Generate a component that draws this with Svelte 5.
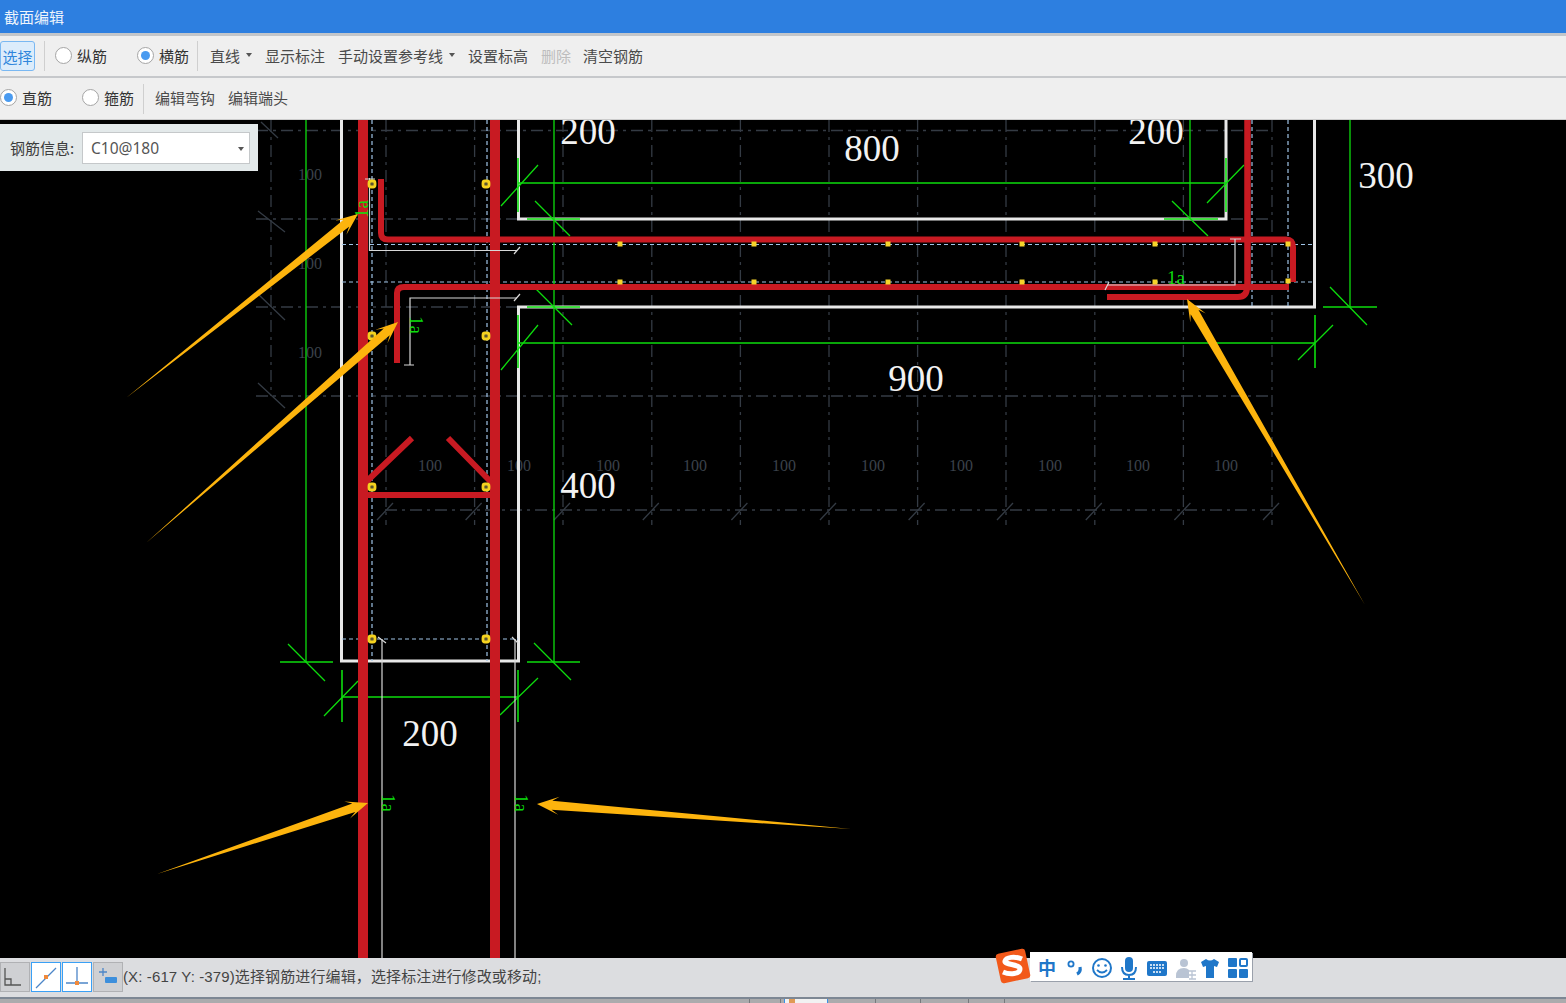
<script>
  const gridX = [386, 474.6, 563, 651.8, 740.4, 829, 917.6, 1006, 1094.8, 1183.4, 1272];
  const gridY = [130.500, 219, 307, 396, 510];
  const hundreds = [430, 519, 608, 695, 784, 873, 961, 1050, 1138, 1226];
  const sideHundreds = [175, 264, 353];
  const smallDots = [[620, 244], [754, 244], [888, 244], [1022, 244], [1155, 244], [620, 282], [754, 282], [888, 282], [1022, 282], [1155, 282], [1288, 244], [1288, 281]];
  const ringDots = [[372, 184], [486, 184], [372, 336], [486, 336], [372, 487], [486, 487], [372, 639], [486, 639]];
  const bigDims = [
    { x: 588, y: 144, t: '200' },
    { x: 872, y: 161, t: '800' },
    { x: 1156, y: 144, t: '200' },
    { x: 1386, y: 188, t: '300' },
    { x: 916, y: 391, t: '900' },
    { x: 588, y: 498, t: '400' },
    { x: 430, y: 746, t: '200' }
  ];
  const taskDividers = [749, 780, 875, 920, 968, 1004];

  // arrow from a thin tail to a swept head
  function arrow(tx, ty, hx, hy) {
    const len = Math.hypot(hx - tx, hy - ty);
    const ux = (hx - tx) / len;
    const uy = (hy - ty) / len;
    const nx = -uy;
    const ny = ux;
    const at = (back, side) => `${(hx - ux * back + nx * side).toFixed(1)},${(hy - uy * back + ny * side).toFixed(1)}`;
    return [`${tx},${ty}`, at(15, 4.5), at(22, 9), `${hx},${hy}`, at(22, -9), at(15, -4.5)].join(' ');
  }

  const arrows = [
    arrow(126, 398, 358, 214),
    arrow(146, 543, 398, 322),
    arrow(157, 874, 368, 803),
    arrow(851, 829, 537, 804),
    arrow(1365, 605, 1187, 299)
  ];
</script>

<div class="window">
  <div class="titlebar">截面编辑</div>

  <div class="toolbar first">
    <button class="select">选择</button>
    <span class="sep"></span>
    <label class="radio r1"><i></i>纵筋</label>
    <label class="radio r2 on"><i></i>横筋</label>
    <span class="sep"></span>
    <span class="tool t1">直线<b></b></span>
    <span class="tool">显示标注</span>
    <span class="tool">手动设置参考线<b></b></span>
    <span class="tool">设置标高</span>
    <span class="tool off">删除</span>
    <span class="tool last">清空钢筋</span>
  </div>

  <div class="toolbar second">
    <label class="radio r3 on"><i></i>直筋</label>
    <label class="radio r4"><i></i>箍筋</label>
    <span class="sep"></span>
    <span class="tool t2">编辑弯钩</span>
    <span class="tool">编辑端头</span>
  </div>

  <div class="canvas">
    <svg viewBox="0 120 1566 838" width="1566" height="838">
      <!-- grid -->
      <g stroke="#343b44" stroke-width="1.3" stroke-dasharray="12 5 3 5" fill="none">
        <path d="M271 120V396" />
        {#each gridX as x}
          <path d="M{x} 120V525" />
        {/each}
        {#each gridY as y}
          <path d="M{y === 510 ? 385 : 256} {y}H1272" />
        {/each}
        {#each gridX as x}
          <path d="M{x - 9} 520L{x + 7} 503" stroke-dasharray="none" />
        {/each}
        <path d="M261 122L278 138M258 211L285 232M258 294L285 320M258 383L285 408" stroke-dasharray="none" />
      </g>
      <g font-family="Liberation Serif, serif" font-size="16" fill="#3b424b" text-anchor="middle">
        {#each hundreds as x}
          <text x={x} y="471">100</text>
        {/each}
        {#each sideHundreds as y}
          <text x="310" y={y + 5}>100</text>
        {/each}
      </g>

      <!-- concrete outline -->
      <path d="M341.500 120V661H518.500V307H1314.500V120M518.500 120V219H1226V120" fill="none" stroke="#e8e8e8" stroke-width="3" />

      <!-- stirrup guide lines -->
      <g stroke="#9fc3e6" stroke-width="1.2" stroke-dasharray="4 3" fill="none">
        <path d="M372 120V661M487 120V661M1252 120V307M1288 120V307" />
        <path d="M342 244.500H1314M342 282H1314M342 639H518" />
      </g>

      <!-- green dimensions -->
      <g stroke="#0ddc0d" stroke-width="1.3" fill="none">
        <path d="M306 120V662M554 120V662M1350 120V307M1190 120V219" />
        <path d="M518 183H1226M518 343H1315M342 697H518" />
        <path d="M280 662H333M527 662H580M1323 307H1377" stroke-width="1.600" />
        <path d="M342 670V722M518 670V722M518 158V212M518 315V368M1226 158V212M1315 315V368" stroke-width="1.600" />
        <path d="M527 219H580M1164 219H1218M527 307H580" stroke-width="1.600" />
        <path d="M288 644L325 681M534 643L571 680M1330 287L1367 325M535 201L570 236M1172 201L1208 236M535 288L572 325" />
        <path d="M324 716L358 681M500 715L538 678M501 206L538 165M1207 203L1244 165M501 370L538 325M1298 360L1333 325" />
      </g>

      <!-- rebar -->
      <g stroke="#c81a22" fill="none">
        <path d="M363 120V958M495 120V958" stroke-width="10" />
        <path d="M1247.500 120V290" stroke-width="6.500" />
        <path d="M381 179V233Q381 239.500 388 239.500H1286Q1293 239.500 1293 247V282" stroke-width="6" />
        <path d="M397 363V293Q397 287 404 287H1289" stroke-width="6" />
        <path d="M1107 297H1238Q1247 297 1247 287" stroke-width="6" />
        <path d="M366 482L412 438M448 438L491 482" stroke-width="6" />
        <path d="M366 495H490" stroke-width="6" />
      </g>

      <!-- rebar annotation lines -->
      <g stroke="#d8d8d8" stroke-width="1.2" fill="none">
        <path d="M369.500 178V250.500H517M410 365V298H517" />
        <path d="M1107 285H1235V239" />
        <path d="M382 639V958M515 639V958" />
        <path d="M365 179H375M404 365H414M514 254L520 247M514 301L520 294M1230 239H1241M1105 290L1109 282M378 637L386 643M512 637L518 643" />
      </g>
      <g font-family="Liberation Serif, serif" font-size="19" fill="#0ddc0d">
        <text x="1167" y="284">1a</text>
        <text transform="translate(410 316) rotate(90)">1a</text>
        <text transform="translate(382 794) rotate(90)">1a</text>
        <text transform="translate(515 794) rotate(90)">1a</text>
        <text transform="translate(368 218) rotate(-90)">1a</text>
      </g>

      <!-- rebar points -->
      {#each smallDots as [x, y]}
        <rect x={x - 2.500} y={y - 2.500} width="5" height="5" fill="#f6d32a" />
      {/each}
      {#each ringDots as [x, y]}
        <rect x={x - 3} y={y - 3} width="6" height="6" rx="2" fill="#5a5530" stroke="#f4d21f" stroke-width="2.800" />
      {/each}

      <!-- dimension values -->
      <g font-family="Liberation Serif, serif" font-size="37" fill="#f2f2f2" text-anchor="middle">
        {#each bigDims as d}
          <text x={d.x} y={d.y}>{d.t}</text>
        {/each}
      </g>

      <!-- arrows -->
      <g fill="#fdb40d">
        {#each arrows as a}
          <polygon points={a} />
        {/each}
      </g>
    </svg>

    <div class="info">
      <span class="info-label">钢筋信息:</span>
      <div class="combo">C10@180<b></b></div>
    </div>
  </div>

  <div class="statusbar">
    <span class="sbtn">
      <svg viewBox="0 0 28 30" width="28" height="30"><path d="M4 6V23H20M4 17H10V23" fill="none" stroke="#555" stroke-width="1.300" /></svg>
    </span>
    <span class="sbtn active">
      <svg viewBox="0 0 28 30" width="28" height="30"><path d="M4 26L24 6" stroke="#4d86c8" stroke-width="1.300" /><rect x="12" y="13" width="4" height="4" fill="#f08a3c" /></svg>
    </span>
    <span class="sbtn active">
      <svg viewBox="0 0 28 30" width="28" height="30"><path d="M14 5V20M3 21H25" stroke="#4d86c8" stroke-width="1.300" /><rect x="12" y="19" width="4" height="4" fill="#f08a3c" /></svg>
    </span>
    <span class="sbtn">
      <svg viewBox="0 0 28 30" width="28" height="30"><path d="M9 6V14M5 10H13" stroke="#4d86c8" stroke-width="1.300" /><rect x="11" y="15" width="12" height="6" rx="1" fill="#3d8fdc" /></svg>
    </span>
    <span class="status-text">(X: -617 Y: -379)选择钢筋进行编辑，选择标注进行修改或移动;</span>

    <div class="ime">
      <svg class="ime-logo" viewBox="0 0 36 36" width="36" height="36">
        <rect x="3" y="3" width="30" height="30" rx="3" fill="#f2591a" transform="rotate(-12 18 18)" />
        <path d="M27 11C20 8 11 9 10 13C9 17 25 16 25 21C25 26 15 27 8 24" fill="none" stroke="#fff" stroke-width="5" />
      </svg>
      <span class="zh">中</span>
      <svg viewBox="0 0 196 28" width="196" height="28" class="ime-icons">
        <g fill="#1f77c9" stroke="#1f77c9">
          <circle cx="11" cy="11" r="2.600" fill="none" stroke-width="1.800" />
          <path d="M17 21Q21 19 20 14" fill="none" stroke-width="3.200" />
          <circle cx="42" cy="15" r="9" fill="none" stroke-width="2" />
          <circle cx="38.500" cy="12.500" r="1.300" stroke="none" />
          <circle cx="45.500" cy="12.500" r="1.300" stroke="none" />
          <path d="M37 17Q42 22 47 17" fill="none" stroke-width="1.800" />
          <rect x="65" y="4" width="8" height="15" rx="4" stroke="none" />
          <path d="M62 14Q62 22 69 22Q76 22 76 14M69 22V26M63 26H75" fill="none" stroke-width="2" />
          <rect x="87" y="8" width="20" height="15" rx="2" stroke="none" />
          <path d="M90 12H104M90 15H104M93 19H101" stroke="#fff" stroke-width="1.500" stroke-dasharray="2 1" />
          <path d="M146 6L141 9 143 14 146 13V25H154V13L157 14 159 9 154 6Q150 9 146 6Z" stroke="none" />
          <rect x="168" y="5" width="9" height="9" rx="1" stroke="none" />
          <rect x="168" y="16" width="9" height="9" rx="1" stroke="none" />
          <rect x="179" y="16" width="9" height="9" rx="1" stroke="none" />
          <rect x="180" y="6" width="7" height="7" rx="1" fill="none" stroke-width="2" />
        </g>
        <g fill="#b9c4d4">
          <circle cx="124" cy="10" r="4" />
          <path d="M116 23Q116 15 124 15Q127 15 129 17V25H116Z" />
        </g>
        <path d="M129 18H136M129 22H136M132 18V26M129 26H136" stroke="#b9c4d4" stroke-width="1.300" />
      </svg>
    </div>
  </div>

  <div class="taskbar">
    {#each taskDividers as x}
      <span class="divider" style="left: {x}px"></span>
    {/each}
    <span class="taskitem"><i></i></span>
  </div>
</div>

<style>
  :global(body) {
    margin: 0;
    background: #000;
    overflow: hidden;
  }

  .window {
    width: 1566px;
    height: 1003px;
    display: flex;
    flex-direction: column;
    font-family: "Noto Sans CJK SC", "Liberation Sans", sans-serif;
    font-size: 15px;
    color: #3c3c3c;
  }

  .titlebar {
    height: 33px;
    flex: none;
    box-sizing: border-box;
    padding-left: 4px;
    line-height: 33px;
    background: #2d7fe0;
    color: #eef4fc;
    font-size: 15px;
  }

  .toolbar {
    flex: none;
    display: flex;
    align-items: center;
    background: #efefef;
    box-sizing: border-box;
  }

  .first {
    height: 45px;
    border-top: 3px solid #c3c6ca;
    border-bottom: 2px solid #c6c8cb;
  }

  .second {
    height: 42px;
    border-bottom: 1px solid #ccc;
  }

  .select {
    width: 35px;
    height: 30px;
    margin: 0;
    padding: 0;
    border: 1px solid #7ab8f2;
    border-radius: 3px;
    background: #dcecfb;
    color: #2f86dc;
    font: inherit;
  }

  .sep {
    width: 1px;
    height: 30px;
    background: #cfcfcf;
  }

  .first .sep:nth-of-type(1) {
    margin-left: 9px;
  }

  .radio {
    display: flex;
    align-items: center;
    gap: 5px;
    margin-bottom: 2px;
    color: #333;
  }

  .radio i {
    width: 17px;
    height: 17px;
    box-sizing: border-box;
    flex: none;
    border: 1px solid #a5a5a5;
    border-radius: 50%;
    background: #fff;
    display: flex;
    align-items: center;
    justify-content: center;
  }

  .radio.on i::after {
    content: "";
    width: 9px;
    height: 9px;
    border-radius: 50%;
    background: #4a9bf0;
  }

  .r1 { margin-left: 10px; }
  .r2 { margin-left: 30px; margin-right: 8px; }
  .r3 { margin-left: 0; }
  .r4 { margin-left: 30px; margin-right: 9px; }

  .tool {
    display: flex;
    align-items: center;
    margin-left: 13px;
    margin-bottom: 2px;
    color: #4a4a4a;
  }

  .tool b {
    width: 0;
    height: 0;
    margin-left: 6px;
    border: 3px solid transparent;
    border-top: 4px solid #555;
    border-bottom: 0;
  }

  .tool.off { color: #bdbdbd; }
  .tool.last { margin-left: 12px; }
  .t1, .t2 { margin-left: 12px; }
  .t2 { margin-left: 11px; }

  .canvas {
    position: relative;
    flex: none;
    height: 838px;
    background: #000;
  }

  .canvas > svg {
    display: block;
  }

  .info {
    position: absolute;
    left: 0;
    top: 4px;
    width: 258px;
    height: 47px;
    box-sizing: border-box;
    padding-left: 10px;
    display: flex;
    align-items: center;
    gap: 7px;
    background: #e3e9ea;
  }

  .info-label {
    width: 65px;
    flex: none;
  }

  .combo {
    position: relative;
    width: 168px;
    height: 32px;
    box-sizing: border-box;
    border: 1px solid #c5c8ca;
    background: #fff;
    padding-left: 8px;
    line-height: 30px;
    font-family: "Noto Sans", "Liberation Sans", sans-serif;
    font-size: 15.500px;
    color: #555;
  }

  .combo b {
    position: absolute;
    right: 5px;
    top: 14px;
    border: 3px solid transparent;
    border-top: 4px solid #555;
    border-bottom: 0;
  }

  .statusbar {
    position: relative;
    flex: none;
    height: 39px;
    box-sizing: border-box;
    padding-top: 4px;
    display: flex;
    align-items: flex-start;
    gap: 1px;
    background: #dcdde0;
  }

  .sbtn {
    width: 30px;
    height: 30px;
    flex: none;
    background: #cfd0d3;
    box-sizing: border-box;
    border: 1px solid #b0b1b4;
    display: flex;
    align-items: center;
    justify-content: center;
  }

  .sbtn svg {
    flex: none;
  }

  .sbtn.active {
    background: #fff;
    border-color: #3aa0f5;
  }

  .status-text {
    margin-left: -1px;
    line-height: 30px;
    font-family: "Liberation Sans", "Noto Sans CJK SC", sans-serif;
    font-size: 15px;
    letter-spacing: 0.120px;
    color: #444;
    white-space: nowrap;
  }

  .ime {
    position: absolute;
    left: 1030px;
    top: -6px;
    width: 222px;
    height: 29px;
    background: #fff;
    box-shadow: 1px 1px 0 #9aa0ab;
    display: flex;
    align-items: center;
  }

  .ime-logo {
    position: absolute;
    left: -35px;
    top: -4px;
  }

  .zh {
    margin-left: 8px;
    color: #1f77c9;
    font-size: 18px;
    font-weight: 700;
  }

  .ime-icons {
    margin-left: 4px;
    flex: none;
  }

  .taskbar {
    position: relative;
    flex: 1;
    background: #ababad;
    border-top: 2px solid #7d8794;
    overflow: hidden;
  }

  .divider {
    position: absolute;
    top: 0;
    width: 1px;
    height: 4px;
    background: #77797c;
  }

  .taskitem {
    position: absolute;
    left: 784px;
    top: 0;
    width: 44px;
    height: 4px;
    box-sizing: border-box;
    border-left: 1px solid #3a90e8;
    border-right: 1px solid #3a90e8;
    background: #f2f2f2;
  }

  .taskitem i {
    display: block;
    width: 6px;
    height: 4px;
    margin-left: 4px;
    background: #e09a55;
  }
</style>
